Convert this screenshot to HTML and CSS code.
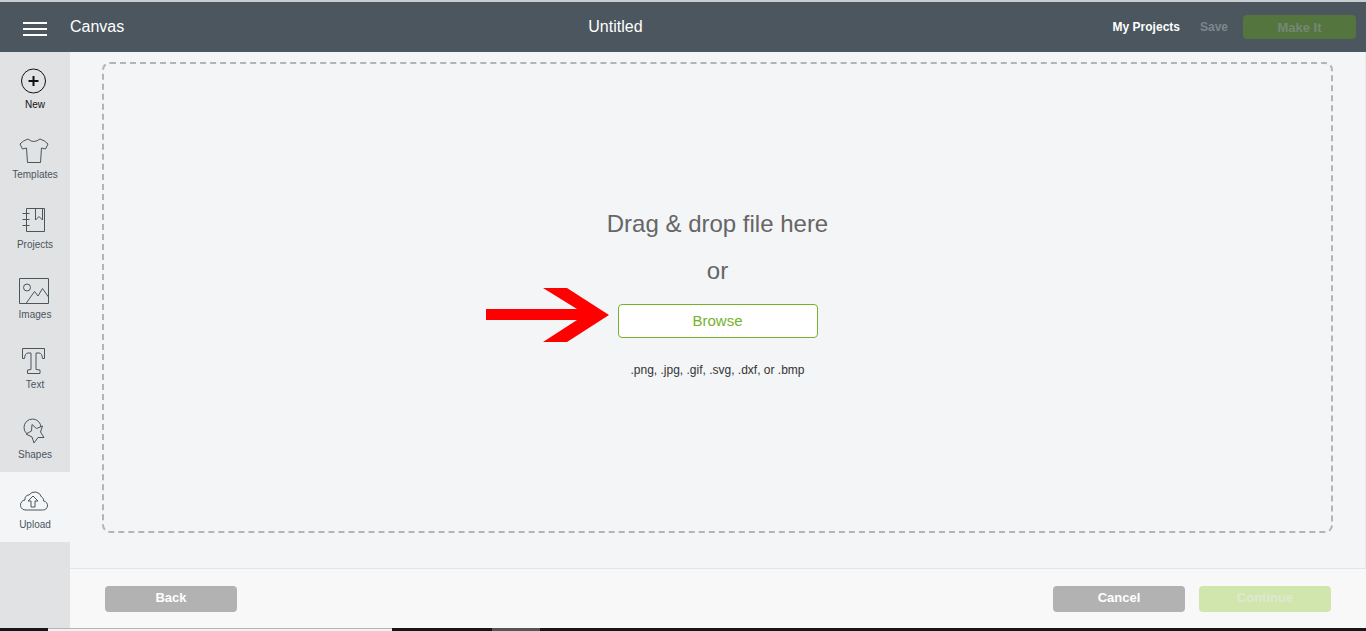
FILE: index.html
```html
<!DOCTYPE html>
<html lang="en">
<head>
    <meta charset="UTF-8">
    <meta name="viewport" content="width=device-width, initial-scale=1.0">
    <title>Canvas - Untitled</title>
    <link rel="stylesheet" href="styles.css">
</head>
<body>
    <header class="topbar">
        <button class="menu" type="button" aria-label="Menu">
            <span></span><span></span><span></span>
        </button>
        <span class="page-name">Canvas</span>
        <h1 class="project-title">Untitled</h1>
        <nav class="actions">
            <a href="#projects">My Projects</a>
            <button class="save" type="button" disabled>Save</button>
            <button class="make-it" type="button" disabled>Make It</button>
        </nav>
    </header>

    <div class="workspace">
        <nav class="sidebar">
            <a class="tool new" href="#new">
                <svg viewBox="0 0 32 28"><circle cx="14.5" cy="14" r="12"/><path d="M14.5 9v10M9.5 14h10" stroke-width="2"/></svg>
                New
            </a>
            <a class="tool" href="#templates">
                <svg viewBox="0 0 32 28"><path d="M1 7Q4 3.5 9 2Q14.5 7 21 2Q26 3.5 29 7L26.5 12L22.5 11L21.5 25.5H8.5L7.5 11L3.5 12Z"/></svg>
                Templates
            </a>
            <a class="tool" href="#my-projects">
                <svg viewBox="0 0 32 28"><path d="M7.5 1.5h18v23h-18zM16.5 1.5V13l3.5-3.5 3.5 3.5V1.5M3.5 6.5h7M3.5 12.5h7M3.5 18.5h7"/></svg>
                Projects
            </a>
            <a class="tool" href="#images">
                <svg viewBox="0 0 32 28"><path d="M.5 1.5h29v25H.5zM7 26.500l8.500-12 3.500 4.500 4.500-7.500 6 8.500"/><circle cx="8" cy="10.5" r="3.5"/></svg>
                Images
            </a>
            <a class="tool" href="#text">
                <svg viewBox="0 0 32 28"><path d="M3.5 1.5h22v10h-2Q23 6 20 6h-3v16.5l4 .5v3.5H8.5V23l3.5-.5V6H9Q6 6 5.5 11.5h-2z"/></svg>
                Text
            </a>
            <a class="tool" href="#shapes">
                <svg viewBox="0 0 32 28"><circle cx="13.5" cy="10.5" r="8.5"/><path class="star" d="M13 7.5L17.5 11.500L23.500 9L21.500 15L25 20.500L19 20.500L15 26L13 20L7 17L12.500 14Z"/></svg>
                Shapes
            </a>
            <a class="tool active" href="#upload">
                <svg viewBox="0 0 32 28"><path d="M7 23a5 5 0 0 1-1-10 4 4 0 0 1 4-5 7 7 0 0 1 12.500 2 3.500 3.500 0 0 1 2 4 4.500 4.500 0 0 1-1 9zM14 9l5 5h-3v6h-4v-6H9z"/></svg>
                Upload
            </a>
        </nav>

        <div class="content">
            <main class="upload">
                <section class="dropzone">
                    <p class="prompt">Drag &amp; drop file here</p>
                    <p class="prompt">or</p>
                    <div class="browse-row">
                        <svg class="arrow" viewBox="0 0 123 54"><path d="M0 21h91L57 0h24l42 27-42 27H57l34-22H0z"/></svg>
                        <button class="browse" type="button">Browse</button>
                    </div>
                    <p class="formats">.png, .jpg, .gif, .svg, .dxf, or .bmp</p>
                </section>
            </main>
            <footer class="footer">
                <button class="back" type="button">Back</button>
                <button type="button">Cancel</button>
                <button class="continue" type="button" disabled>Continue</button>
            </footer>
        </div>
    </div>

    <div class="taskbar"><span class="start"></span><span class="search"></span><span class="gap"></span><span class="running"></span></div>
</body>
</html>
```
FILE: styles.css
```css
* {
    box-sizing: border-box;
}

body {
    margin: 0;
    min-height: 100vh;
    display: flex;
    flex-direction: column;
    font-family: "Liberation Sans", Arial, sans-serif;
    background-color: #f4f5f7;
    color: #4b555c;
}

button {
    font-family: inherit;
    border: none;
    padding: 0;
    cursor: pointer;
}

a {
    color: inherit;
    text-decoration: none;
}

/* top bar */
.topbar {
    display: flex;
    align-items: center;
    height: 52px;
    padding: 0 10px 0 23px;
    border-top: 2px solid #c9cdd0;
    background-color: #4b565e;
    color: #fff;
}

.menu {
    display: flex;
    flex-direction: column;
    gap: 4px;
    width: 24px;
    margin: 4px 23px 0 0;
    background: none;
}

.menu span {
    height: 2px;
    background-color: #fff;
}

.page-name,
.project-title {
    font-size: 16px;
    font-weight: normal;
    line-height: 20px;
}

.project-title {
    flex: 1;
    margin: 0;
    text-align: center;
}

.actions {
    display: flex;
    align-items: center;
    padding-left: 6px;
    font-size: 12px;
    font-weight: bold;
}

.save {
    margin: 0 15px 0 20px;
    background: none;
    color: #7d868c;
    font-size: 12px;
    font-weight: bold;
}

.make-it {
    width: 113px;
    height: 24px;
    border-radius: 4px;
    background-color: #55753f;
    color: #758775;
    font-size: 13px;
    font-weight: bold;
}

/* left tools */
.workspace {
    flex: 1;
    display: flex;
}

.sidebar {
    width: 70px;
    background-color: #e1e2e4;
}

.tool {
    display: flex;
    flex-direction: column;
    align-items: center;
    gap: 4px;
    height: 70px;
    padding-top: 15px;
    font-size: 10px;
    line-height: 12px;
}

.tool svg {
    width: 32px;
    height: 28px;
    fill: none;
    stroke: currentColor;
}

.tool .star {
    fill: #e1e2e4;
}

.new {
    color: #111;
}

.active {
    background-color: #f4f5f7;
}

/* upload area */
.content {
    flex: 1;
    display: flex;
    flex-direction: column;
}

.upload {
    flex: 1;
    display: flex;
    padding: 10px 32px 35px;
    border-right: 1px solid #e9eaec;
}

.dropzone {
    flex: 1;
    display: flex;
    flex-direction: column;
    align-items: center;
    justify-content: center;
    gap: 20px;
    padding-bottom: 8px;
    border: 2px dashed #b3b4b6;
    border-radius: 8px;
}

.prompt {
    margin: 0;
    font-size: 24px;
    line-height: 27px;
    color: #666;
}

.browse-row {
    position: relative;
}

.browse {
    display: block;
    width: 200px;
    height: 34px;
    padding-bottom: 2px;
    border: 1px solid #76b22d;
    border-radius: 4px;
    background-color: #fff;
    color: #76b22d;
    font-size: 15px;
}

/* points at the browse button */
.arrow {
    position: absolute;
    top: -16px;
    right: 209px;
    width: 123px;
    height: 54px;
    fill: #f00;
}

.formats {
    margin: 5px 0 0;
    font-size: 12px;
    line-height: 14px;
    color: #333;
}

.footer {
    display: flex;
    align-items: center;
    gap: 14px;
    height: 60px;
    padding: 0 35px;
    border-top: 1px solid #e3e4e5;
    background-color: #f8f8f8;
}

.footer button {
    width: 132px;
    height: 26px;
    padding-bottom: 2px;
    border-radius: 4px;
    background-color: #b2b2b2;
    color: #fff;
    font-size: 13px;
    font-weight: bold;
}

.footer .back {
    margin-right: auto;
}

.footer .continue {
    background-color: #d0e6ad;
    color: #dfe9d0;
}

/* strip under the page */
.taskbar {
    display: flex;
    height: 3px;
    background-color: #15171a;
}

.start {
    width: 48px;
}

.search {
    width: 344px;
    border-top: 1px solid #b5b5b5;
    background-color: #f2f2f2;
}

.gap {
    width: 100px;
}

.running {
    width: 48px;
    background-color: #555;
}
```
